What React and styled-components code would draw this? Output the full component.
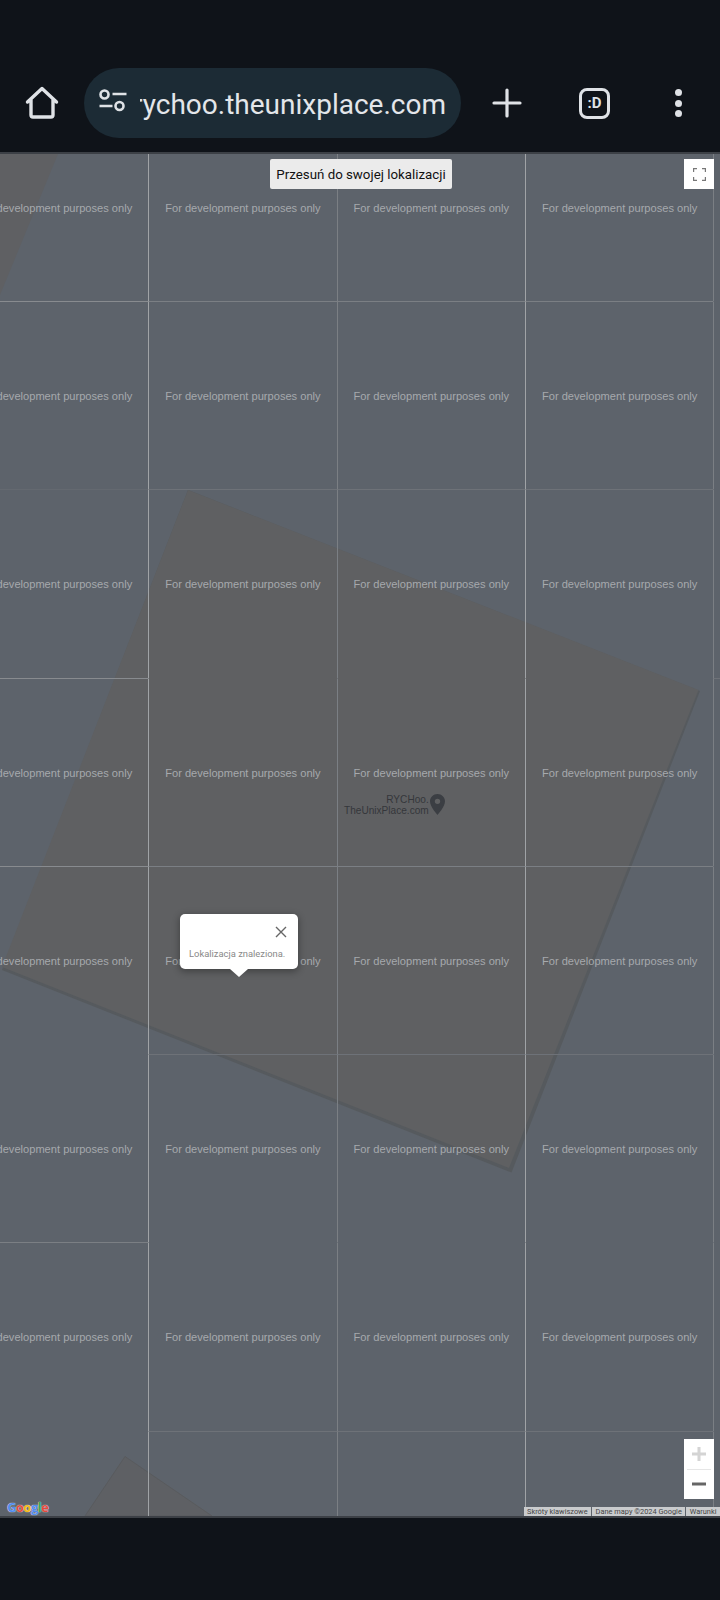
import styled, { createGlobalStyle } from "styled-components"

const COLS = 5
const ROWS = 8

// line strength on top of each tile row, per column group
const topLines = {
    left: [null, "strong", "faint", "strong", "strong", null, "mid", null],
    middle: [null, "mid", "dim", null, "mid", "dim", null, "dim"],
    right: [null, null, null, "dim", null, null, null, null],
}
const leftLines = [null, "bright", "mid", "bright", "mid"]

const lineColors = {
    bright: "#a0a3a6",
    strong: "#888b8f",
    mid: "#7b7f84",
    dim: "#6e7278",
    faint: "#646970",
}

const groupOf = (col) => {
    if (col === 0) return "left"
    if (col === COLS - 1) return "right"
    return "middle"
}

const tiles = []
for (let row = 0; row < ROWS; row++) {
    for (let col = 0; col < COLS; col++) {
        tiles.push({
            id: `${row}-${col}`,
            top: topLines[groupOf(col)][row],
            left: leftLines[col],
        })
    }
}

const HomeIcon = () => (
    <svg width="36" height="36" viewBox="0 0 36 36" fill="none" stroke="#dfe2e6" strokeWidth="3.4" strokeLinejoin="round" strokeLinecap="round">
        <path d="M3.5 17 18 3.5 32.5 17M7 14v16a2 2 0 0 0 2 2h18a2 2 0 0 0 2-2V14" />
    </svg>
)

const TuneIcon = () => (
    <svg width="30" height="30" viewBox="0 0 30 30" fill="none" stroke="#dfe2e6" strokeWidth="2.6">
        <circle cx="6.5" cy="6.5" r="4" />
        <circle cx="21.5" cy="18" r="4" />
        <path d="M14.5 6h14M1.5 18h13" />
    </svg>
)

const PlusIcon = () => (
    <svg width="30" height="30" viewBox="0 0 30 30" fill="none" stroke="#dfe2e6" strokeWidth="3.2" strokeLinecap="round">
        <path d="M15 2v26M2 15h26" />
    </svg>
)

const FullscreenIcon = () => (
    <svg width="13" height="13" viewBox="0 0 13 13" fill="none" stroke="#777" strokeWidth="1.2">
        <path d="M.6 4V.6h3.4M9 .6h3.4V4M12.4 9v3.4H9M4 12.4H.6V9" />
    </svg>
)

const PinIcon = () => (
    <svg width="15" height="21" viewBox="5 2 14 20" preserveAspectRatio="none" fill="#3b3e43">
        <path d="M12 2C8.13 2 5 5.13 5 9c0 5.25 7 13 7 13s7-7.75 7-13c0-3.87-3.13-7-7-7zm0 9.5a2.5 2.5 0 0 1 0-5 2.5 2.5 0 0 1 0 5z" />
    </svg>
)

const CloseIcon = () => (
    <svg width="12" height="12" viewBox="0 0 12 12" fill="none" stroke="#666" strokeWidth="1.4">
        <path d="M1 1l10 10M11 1 1 11" />
    </svg>
)

const ZoomInIcon = () => (
    <svg width="14" height="14" viewBox="0 0 14 14" fill="none" stroke="#d4d4d4" strokeWidth="3">
        <path d="M7 0v14M0 7h14" />
    </svg>
)

const ZoomOutIcon = () => (
    <svg width="14" height="14" viewBox="0 0 14 14" fill="none" stroke="#666" strokeWidth="3">
        <path d="M0 7h14" />
    </svg>
)

const App = () => {
    return (
        <Page>
            <GlobalStyle />
            <Toolbar>
                <HomeButton>
                    <HomeIcon />
                </HomeButton>
                <Omnibox>
                    <TuneIcon />
                    <UrlClip>
                        <UrlText>rychoo.theunixplace.com</UrlText>
                    </UrlClip>
                </Omnibox>
                <PlusButton>
                    <PlusIcon />
                </PlusButton>
                <TabCounter>:D</TabCounter>
                <MenuDots>
                    <span />
                    <span />
                    <span />
                </MenuDots>
            </Toolbar>
            <MapArea>
                <Shapes viewBox="0 0 720 1362">
                    <polygon points="0,0 58,0 0,141" fill="#5f6063" />
                    <polygon points="188,336 700,537 511.5,1018.5 2,816" fill="#565a5e" />
                    <polygon points="188,336 698.5,536 509,1014 2,813" fill="#5f6062" />
                    <polygon points="125,1302.5 212,1362 85,1362" fill="#5e6064" stroke="#595b5e" />
                </Shapes>
                <TileGrid>
                    {tiles.map((tile) => (
                        <Tile key={tile.id} $top={tile.top} $left={tile.left}>
                            For development purposes only
                        </Tile>
                    ))}
                </TileGrid>
                <LocateButton>Przesuń do swojej lokalizacji</LocateButton>
                <FullscreenButton>
                    <FullscreenIcon />
                </FullscreenButton>
                <Marker>
                    <MarkerLabel>
                        RYCHoo.
                        <br />
                        TheUnixPlace.com
                    </MarkerLabel>
                    <PinIcon />
                </Marker>
                <Popup>
                    <PopupClose>
                        <CloseIcon />
                    </PopupClose>
                    <PopupText>Lokalizacja znaleziona.</PopupText>
                </Popup>
                <ZoomControl>
                    <ZoomButton>
                        <ZoomInIcon />
                    </ZoomButton>
                    <ZoomDivider />
                    <ZoomButton>
                        <ZoomOutIcon />
                    </ZoomButton>
                </ZoomControl>
                <GoogleLogo>
                    <Letter $color="#4f8bf0">G</Letter>
                    <Letter $color="#e5493c">o</Letter>
                    <Letter $color="#f4b90f">o</Letter>
                    <Letter $color="#4f8bf0">g</Letter>
                    <Letter $color="#34a853">l</Letter>
                    <Letter $color="#e5493c">e</Letter>
                </GoogleLogo>
                <Attribution>
                    <AttributionItem>Skróty klawiszowe</AttributionItem>
                    <AttributionItem>Dane mapy ©2024 Google</AttributionItem>
                    <AttributionItem>Warunki</AttributionItem>
                </Attribution>
            </MapArea>
            <BottomBar />
        </Page>
    )
}

export default App

const GlobalStyle = createGlobalStyle`
    html, body {
        margin: 0;
        padding: 0;
        background: #0f1319;
    }
`

const Page = styled.div`
    display: flex;
    flex-direction: column;
    width: 720px;
    height: 1600px;
    overflow: hidden;
    background: #0f1319;
    font-family: Roboto, "Liberation Sans", sans-serif;
`

const Toolbar = styled.div`
    display: flex;
    align-items: center;
    height: 70px;
    padding-top: 68px;
    padding-bottom: 14px;
    box-sizing: content-box;
    border-bottom: 2px solid #3c4046;
`

const HomeButton = styled.div`
    display: flex;
    margin-left: 24px;
    width: 36px;
    height: 36px;
`

const Omnibox = styled.div`
    display: flex;
    align-items: center;
    width: 377px;
    height: 70px;
    margin-left: 24px;
    padding-left: 14px;
    box-sizing: border-box;
    border-radius: 35px;
    background: #1c2b35;
    color: #e3e6ea;
`

const UrlClip = styled.div`
    display: flex;
    justify-content: flex-end;
    width: 306px;
    margin-left: 12px;
    padding-top: 4px;
    overflow: hidden;
`

const UrlText = styled.span`
    flex-shrink: 0;
    font-size: 28px;
    line-height: 40px;
    white-space: nowrap;
`

const PlusButton = styled.div`
    display: flex;
    margin-left: 31px;
    width: 30px;
    height: 30px;
`

const TabCounter = styled.div`
    display: flex;
    align-items: center;
    justify-content: center;
    width: 31px;
    height: 31px;
    margin-left: 57px;
    box-sizing: border-box;
    border: 3.5px solid #dfe2e6;
    border-radius: 8px;
    color: #dfe2e6;
    font-size: 15px;
    font-weight: 700;
`

const MenuDots = styled.div`
    display: flex;
    flex-direction: column;
    gap: 3.5px;
    margin-left: 65px;

    span {
        width: 7px;
        height: 7px;
        border-radius: 50%;
        background: #dfe2e6;
    }
`

const MapArea = styled.div`
    position: relative;
    height: 1362px;
    overflow: hidden;
    background: #5d636b;
`

const Shapes = styled.svg`
    position: absolute;
    top: 0;
    left: 0;
    width: 720px;
    height: 1362px;
`

const TileGrid = styled.div`
    position: relative;
    display: grid;
    grid-template-columns: repeat(5, 188.4px);
    grid-auto-rows: 188.25px;
    margin-top: -41.25px;
    margin-left: -40.2px;
    width: 942px;
`

const Tile = styled.div`
    display: flex;
    align-items: center;
    justify-content: center;
    box-sizing: border-box;
    padding-top: 1px;
    border-top: 1px solid ${(p) => (p.$top ? lineColors[p.$top] : "transparent")};
    border-left: 1px solid ${(p) => (p.$left ? lineColors[p.$left] : "transparent")};
    color: #a6a9ad;
    font-family: "Liberation Sans", Arial, sans-serif;
    font-size: 11.1px;
    white-space: nowrap;
`

const LocateButton = styled.div`
    position: absolute;
    top: 5px;
    left: 270px;
    width: 182px;
    height: 30px;
    display: flex;
    align-items: center;
    justify-content: center;
    border-radius: 2px;
    background: #ebebeb;
    color: #111;
    font-size: 13.3px;
    white-space: nowrap;
`

const FullscreenButton = styled.div`
    position: absolute;
    top: 5px;
    left: 684px;
    width: 30px;
    height: 30px;
    display: flex;
    align-items: center;
    justify-content: center;
    background: #fff;
`

const Marker = styled.div`
    position: absolute;
    top: 640px;
    left: 344px;
    display: flex;
    align-items: flex-start;
    gap: 1px;
`

const MarkerLabel = styled.div`
    margin-top: 1px;
    color: #35373b;
    font-family: "Liberation Sans", Arial, sans-serif;
    font-size: 10.1px;
    line-height: 10.5px;
    text-align: right;
    white-space: nowrap;
`

const Popup = styled.div`
    position: absolute;
    top: 760px;
    left: 180px;
    width: 118px;
    height: 55px;
    box-sizing: border-box;
    padding: 10px 8px 0 9px;
    border-radius: 5px;
    background: #fff;
    box-shadow: 0 2px 7px 1px rgba(0, 0, 0, 0.3);

    &::after {
        content: "";
        position: absolute;
        left: 50%;
        bottom: -8px;
        margin-left: -9px;
        border-top: 8px solid #fff;
        border-left: 9px solid transparent;
        border-right: 9px solid transparent;
    }
`

const PopupClose = styled.div`
    display: flex;
    justify-content: flex-end;
    height: 15px;
    padding-right: 3px;
    padding-top: 2px;
`

const PopupText = styled.div`
    margin-top: 7px;
    color: #888;
    font-size: 9.4px;
    white-space: nowrap;
`

const ZoomControl = styled.div`
    position: absolute;
    top: 1285px;
    left: 684px;
    width: 30px;
    height: 60px;
    display: flex;
    flex-direction: column;
    align-items: center;
    background: #fff;
`

const ZoomButton = styled.div`
    display: flex;
    align-items: center;
    justify-content: center;
    height: 29.5px;
`

const ZoomDivider = styled.div`
    width: 24px;
    height: 1px;
    background: #e6e6e6;
`

const GoogleLogo = styled.div`
    position: absolute;
    left: 7px;
    bottom: 0;
    display: flex;
    font-family: "Open Sans", sans-serif;
    font-size: 12.8px;
    font-weight: 700;
    letter-spacing: -0.4px;
    line-height: 17px;
    text-shadow: 0 0 1px #d8dbe0, 0 0 1px #d8dbe0;
`

const Letter = styled.span`
    color: ${(p) => p.$color};
`

const Attribution = styled.div`
    position: absolute;
    right: 0;
    bottom: 0;
    display: flex;
    gap: 1px;
`

const AttributionItem = styled.div`
    height: 9.5px;
    padding: 0 3.5px;
    background: #c9cbcd;
    color: #444;
    font-size: 7.4px;
    line-height: 10px;
    white-space: nowrap;
`

const BottomBar = styled.div`
    flex: 1;
    border-top: 2px solid #3c4046;
    background: #0f1319;
`
